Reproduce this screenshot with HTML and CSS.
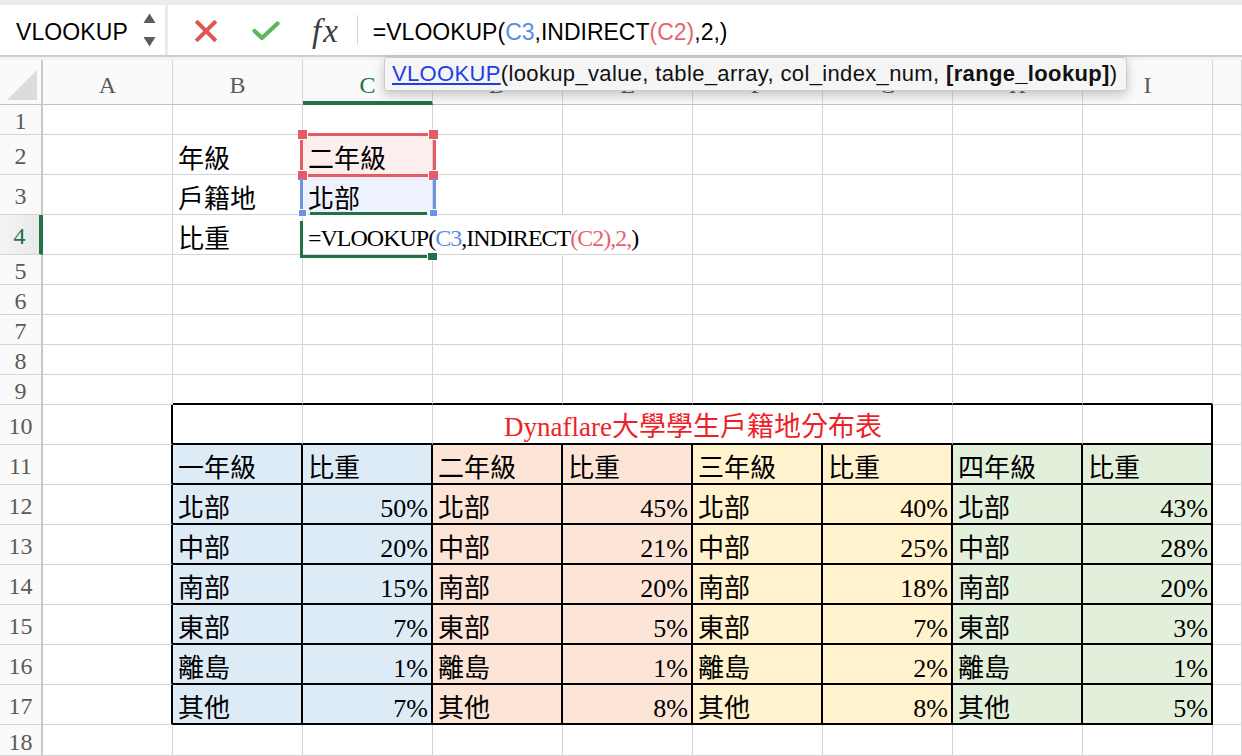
FILE: index.html
```html
<!DOCTYPE html>
<html lang="zh-Hant">
<head>
<meta charset="utf-8">
<title>VLOOKUP</title>
<link rel="stylesheet" href="styles.css">
</head>
<body>
<div class="app">
  <div class="fbar">
    <div class="namebox">
      <span class="nb-text">VLOOKUP</span>
      <svg class="spin" width="13" height="34" viewBox="0 0 13 34"><path d="M0.5 10 L6.5 0.5 L12.5 10 Z" fill="#5c5c5c"/><path d="M0.5 24 L6.5 33.5 L12.5 24 Z" fill="#5c5c5c"/></svg>
    </div>
    <div class="fxzone">
      <svg class="ic-x" width="22" height="22" viewBox="0 0 22 22"><path d="M2.5 2.5 L19.5 19.5 M19.5 2.5 L2.5 19.5" stroke="#e05656" stroke-width="4" stroke-linecap="square"/></svg>
      <svg class="ic-ok" width="28" height="20" viewBox="0 0 28 20"><path d="M2.5 10 L10 17 L25.5 2.5" fill="none" stroke="#5cb85c" stroke-width="4.2" stroke-linecap="round" stroke-linejoin="round"/></svg>
      <span class="ic-fx">fx</span>
      <div class="fsep"></div>
      <div class="ftext">=VLOOKUP(<span class="rb">C3</span>,INDIRECT<span class="rr">(C2)</span>,2,)</div>
    </div>
  </div>

  <div class="sheet">
    <!-- header -->
    <div class="corner"><svg width="30" height="30" viewBox="0 0 30 30"><path d="M30 0 L30 30 L0 30 Z" fill="#dcdcdc"/></svg></div>
    <div class="hc">A</div><div class="hc">B</div><div class="hc hc-act">C</div><div class="hc">D</div><div class="hc">E</div><div class="hc">F</div><div class="hc">G</div><div class="hc">H</div><div class="hc">I</div><div class="hc"></div>

    <!-- 1 -->
    <div class="rh">1</div><div class="c"></div><div class="c"></div><div class="c"></div><div class="c"></div><div class="c"></div><div class="c"></div><div class="c"></div><div class="c"></div><div class="c"></div><div class="c"></div>
    <!-- 2 -->
    <div class="rh">2</div><div class="c"></div><div class="c">年級</div><div class="c sel-red">二年級</div><div class="c"></div><div class="c"></div><div class="c"></div><div class="c"></div><div class="c"></div><div class="c"></div><div class="c"></div>
    <!-- 3 -->
    <div class="rh">3</div><div class="c"></div><div class="c">戶籍地</div><div class="c sel-blue">北部</div><div class="c"></div><div class="c"></div><div class="c"></div><div class="c"></div><div class="c"></div><div class="c"></div><div class="c"></div>
    <!-- 4 -->
    <div class="rh rh-act">4</div><div class="c"></div><div class="c">比重</div><div class="c span3 fml">=VLOOKUP(<span class="rb">C3</span>,INDIRECT<span class="rr">(C2),2,</span>)</div><div class="c"></div><div class="c"></div><div class="c"></div><div class="c"></div><div class="c"></div>
    <!-- 5 -->
    <div class="rh">5</div><div class="c"></div><div class="c"></div><div class="c"></div><div class="c"></div><div class="c"></div><div class="c"></div><div class="c"></div><div class="c"></div><div class="c"></div><div class="c"></div>
    <!-- 6 -->
    <div class="rh">6</div><div class="c"></div><div class="c"></div><div class="c"></div><div class="c"></div><div class="c"></div><div class="c"></div><div class="c"></div><div class="c"></div><div class="c"></div><div class="c"></div>
    <!-- 7 -->
    <div class="rh">7</div><div class="c"></div><div class="c"></div><div class="c"></div><div class="c"></div><div class="c"></div><div class="c"></div><div class="c"></div><div class="c"></div><div class="c"></div><div class="c"></div>
    <!-- 8 -->
    <div class="rh">8</div><div class="c"></div><div class="c"></div><div class="c"></div><div class="c"></div><div class="c"></div><div class="c"></div><div class="c"></div><div class="c"></div><div class="c"></div><div class="c"></div>
    <!-- 9 -->
    <div class="rh">9</div><div class="c"></div><div class="c tb"></div><div class="c tb"></div><div class="c tb"></div><div class="c tb"></div><div class="c tb"></div><div class="c tb"></div><div class="c tb"></div><div class="c tb"></div><div class="c"></div>
    <!-- 10 -->
    <div class="rh">10</div><div class="c tl"></div><div class="c t tg"></div><div class="c t tg"></div><div class="c t tg span4 title">Dynaflare大學學生戶籍地分布表</div><div class="c t tg"></div><div class="c t"></div><div class="c"></div>
    <!-- 11 -->
    <div class="rh">11</div><div class="c tl"></div><div class="c t fb">一年級</div><div class="c t fb">比重</div><div class="c t fp">二年級</div><div class="c t fp">比重</div><div class="c t fy">三年級</div><div class="c t fy">比重</div><div class="c t fg">四年級</div><div class="c t fg">比重</div><div class="c"></div>
    <!-- 12 -->
    <div class="rh">12</div><div class="c tl"></div><div class="c t fb">北部</div><div class="c t fb n">50%</div><div class="c t fp">北部</div><div class="c t fp n">45%</div><div class="c t fy">北部</div><div class="c t fy n">40%</div><div class="c t fg">北部</div><div class="c t fg n">43%</div><div class="c"></div>
    <!-- 13 -->
    <div class="rh">13</div><div class="c tl"></div><div class="c t fb">中部</div><div class="c t fb n">20%</div><div class="c t fp">中部</div><div class="c t fp n">21%</div><div class="c t fy">中部</div><div class="c t fy n">25%</div><div class="c t fg">中部</div><div class="c t fg n">28%</div><div class="c"></div>
    <!-- 14 -->
    <div class="rh">14</div><div class="c tl"></div><div class="c t fb">南部</div><div class="c t fb n">15%</div><div class="c t fp">南部</div><div class="c t fp n">20%</div><div class="c t fy">南部</div><div class="c t fy n">18%</div><div class="c t fg">南部</div><div class="c t fg n">20%</div><div class="c"></div>
    <!-- 15 -->
    <div class="rh">15</div><div class="c tl"></div><div class="c t fb">東部</div><div class="c t fb n">7%</div><div class="c t fp">東部</div><div class="c t fp n">5%</div><div class="c t fy">東部</div><div class="c t fy n">7%</div><div class="c t fg">東部</div><div class="c t fg n">3%</div><div class="c"></div>
    <!-- 16 -->
    <div class="rh">16</div><div class="c tl"></div><div class="c t fb">離島</div><div class="c t fb n">1%</div><div class="c t fp">離島</div><div class="c t fp n">1%</div><div class="c t fy">離島</div><div class="c t fy n">2%</div><div class="c t fg">離島</div><div class="c t fg n">1%</div><div class="c"></div>
    <!-- 17 -->
    <div class="rh">17</div><div class="c tl"></div><div class="c t fb">其他</div><div class="c t fb n">7%</div><div class="c t fp">其他</div><div class="c t fp n">8%</div><div class="c t fy">其他</div><div class="c t fy n">8%</div><div class="c t fg">其他</div><div class="c t fg n">5%</div><div class="c"></div>
    <!-- 18 -->
    <div class="rh">18</div><div class="c"></div><div class="c"></div><div class="c"></div><div class="c"></div><div class="c"></div><div class="c"></div><div class="c"></div><div class="c"></div><div class="c"></div><div class="c"></div>

    <!-- reference highlight overlays -->
    <div class="ref-red"></div>
    <div class="sq sq-r sq1"></div><div class="sq sq-r sq2"></div><div class="sq sq-r sq3"></div><div class="sq sq-r sq4"></div>
    <div class="ref-blue-l"></div><div class="ref-blue-r"></div>
    <div class="act-top"></div><div class="act-left"></div><div class="act-bottom"></div>
    <div class="sq sq-b sq5"></div><div class="sq sq-b sq6"></div>
    <div class="sq sq-g handle"></div>
  </div>

  <div class="tip"><span class="tip-text"><span class="tip-fn">VLOOKUP</span>(lookup_value, table_array, col_index_num, <b>[range_lookup]</b>)</span></div>
</div>
</body>
</html>
```

FILE: styles.css
```css
* { box-sizing: border-box; margin: 0; padding: 0; }
html, body { width: 1242px; height: 756px; overflow: hidden; background: #fff; }
body { font-family: "Liberation Sans", Arial, sans-serif; color: #000; }

.app { position: relative; width: 1242px; height: 756px; overflow: hidden; }

/* ---------- formula bar ---------- */
.fbar {
  height: 60px;
  padding-top: 5px;
  display: flex;
  gap: 3px;
  background: linear-gradient(#ebebeb 0 55px, #cdcdcd 55px 57px, #f3f3f3 57px 60px);
}
.namebox {
  width: 165px;
  height: 50px;
  background: #fff;
  display: flex;
  align-items: center;
  justify-content: space-between;
  padding: 0 9px 0 16px;
}
.nb-text { font-size: 23px; letter-spacing: 0.1px; margin-top: 5px; }
.spin { display: block; }

.fxzone {
  flex: 1;
  height: 50px;
  background: #fff;
  display: flex;
  align-items: center;
  padding-left: 27px;
}
.ic-x { display: block; margin-top: 2px; }
.ic-ok { display: block; margin-left: 35px; margin-top: 1px; }
.ic-fx {
  margin-left: 32px;
  font-family: "Liberation Serif", serif;
  font-style: italic;
  font-size: 33px;
  color: #3c3c3c;
  letter-spacing: 2px;
  margin-top: 2px;
}
.fsep { width: 1px; height: 30px; background: #d6d6d6; margin-left: 17px; }
.ftext { margin-left: 15px; font-size: 23px; white-space: nowrap; margin-top: 5px; }
.rb { color: #5b8be2; }
.rr { color: #e8646c; }

/* ---------- sheet grid ---------- */
.sheet {
  position: relative;
  display: grid;
  grid-template-columns: 43px repeat(9, 130px) 29px;
  grid-template-rows: 45px 30px 40px 40px 40px repeat(5, 30px) repeat(8, 40px) 31px;
}

.corner {
  border-right: 2px solid #c8c8c8;
  border-bottom: 1px solid #c2c2c2;
  display: flex;
  align-items: flex-end;
  justify-content: flex-end;
  padding: 0 4px 4px 0;
  background: #fafafa;
}
.corner svg { display: block; }

.hc {
  border-right: 1px solid #d6d6d6;
  border-bottom: 1px solid #c2c2c2;
  display: flex;
  align-items: center;
  justify-content: center;
  padding-top: 6px;
  font-family: "Liberation Serif", serif;
  font-size: 24px;
  color: #5a5a5a;
  background: #fafafa;
}
.hc-act {
  color: #217346;
  border-bottom: 4px solid #217346;
  padding-top: 9px;
}

.rh {
  border-right: 2px solid #c8c8c8;
  border-bottom: 1px solid #d4d4d4;
  display: flex;
  align-items: center;
  justify-content: center;
  padding-top: 4px;
  font-family: "Liberation Serif", serif;
  font-size: 24px;
  color: #5a5a5a;
  background: #fafafa;
}
.rh-act {
  color: #217346;
  border-right: 4px solid #217346;
  background: linear-gradient(to right, #f4f4f4, #e9e9e9);
}

.c {
  border-right: 1px solid #d4d4d4;
  border-bottom: 1px solid #d4d4d4;
  display: flex;
  align-items: flex-end;
  padding: 0 4px 1px 5px;
  font-family: "Liberation Serif", "Noto Sans CJK TC", serif;
  font-size: 26px;
  line-height: 1;
  white-space: nowrap;
}

.span3 { grid-column: span 3; }
.span4 { grid-column: span 4; justify-content: center; }

.sel-red { background: #fdeeee; }
.sel-blue { background: #eef2fc; }
.fml { font-size: 24px; letter-spacing: -1px; padding-bottom: 4px; }

/* table */
.tb { border-bottom: 2px solid #000; }
.tl { border-right: 2px solid #000; }
.t { border-right: 2px solid #000; border-bottom: 2px solid #000; }
.tg { border-right: 1px solid #d4d4d4; }
.title { color: #ee1f29; font-size: 27px; padding-bottom: 2px; }
.fb { background: #ddebf7; }
.fp { background: #fce4d6; }
.fy { background: #fff2cc; }
.fg { background: #e2efda; }
.n { justify-content: flex-end; padding-right: 3px; }

/* formula reference highlights (overlay) */
.ref-red {
  position: absolute;
  left: 300px; top: 73px;
  width: 136px; height: 44px;
  border: 3px solid #e65c63;
}
.sq { position: absolute; border: 1px solid #fff; }
.sq-r { width: 11px; height: 11px; background: #e65c63; }
.sq1 { left: 297px; top: 69px; }
.sq2 { left: 428px; top: 69px; }
.sq3 { left: 297px; top: 110px; }
.sq4 { left: 428px; top: 110px; }
.ref-blue-l, .ref-blue-r {
  position: absolute;
  top: 118px; width: 3px; height: 34px;
  background: #6a95e6;
}
.ref-blue-l { left: 300px; }
.ref-blue-r { left: 433px; }
.sq-b { width: 9px; height: 8px; background: #6a95e6; }
.sq5 { left: 298px; top: 149px; }
.sq6 { left: 429px; top: 149px; }
.act-top { position: absolute; left: 310px; top: 152px; width: 117px; height: 3px; background: #217346; }
.act-left { position: absolute; left: 300px; top: 161px; width: 3px; height: 37px; background: #217346; }
.act-bottom { position: absolute; left: 300px; top: 195px; width: 128px; height: 3px; background: #217346; }
.sq-g { width: 11px; height: 9px; background: #217346; }
.handle { left: 427px; top: 192px; }

/* function tooltip */
.tip {
  position: absolute;
  left: 384px; top: 57px;
  height: 34px;
  padding: 0 9px 0 7px;
  display: flex;
  align-items: center;
  white-space: nowrap;
  background: #f5f5f5;
  border: 1px solid #cbcbcb;
  border-radius: 3px;
  box-shadow: 0 4px 12px rgba(0, 0, 0, 0.22);
  font-size: 22px;
  color: #111;
}
.tip-text { letter-spacing: 0.35px; }
.tip-fn { color: #1f3fe6; text-decoration: underline; }
.tip b { font-weight: 700; }
```
